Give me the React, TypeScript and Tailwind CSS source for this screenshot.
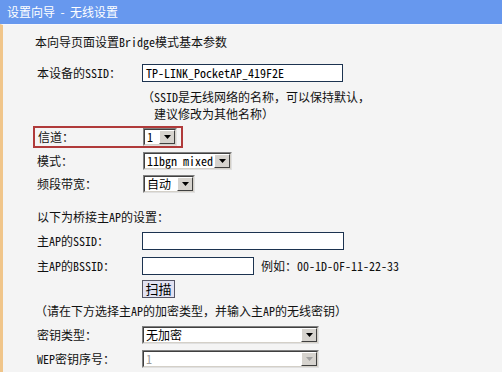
import React from "react";

const Arrow = ({ disabled }: { disabled?: boolean }) => (
  <div className="w-[16px] h-full shrink-0 bg-[#d6d3ce] border border-t-white border-l-white border-r-[#404040] border-b-[#404040] flex items-center justify-center">
    <svg width="7" height="4" viewBox="0 0 7 4">
      <path d="M0 0h7L3.5 4z" fill={disabled ? "#a0a0a0" : "#000"} />
    </svg>
  </div>
);

const Select = ({
  value,
  width,
  disabled,
}: {
  value: string;
  width: string;
  disabled?: boolean;
}) => (
  <div
    className={`${width} h-[18px] flex bg-white border border-t-[#808080] border-l-[#808080] border-r-[#e0e0e0] border-b-[#e0e0e0]`}
  >
    <div className="flex flex-1 border border-t-[#404040] border-l-[#404040] border-r-[#d4d0c8] border-b-[#d4d0c8]">
      <div
        className={`flex-1 pl-[2px] leading-[14px] whitespace-nowrap ${
          disabled ? "text-[#9a9a9a]" : "text-black"
        }`}
      >
        {value}
      </div>
      <Arrow disabled={disabled} />
    </div>
  </div>
);

const Input = ({ value, width }: { value?: string; width: string }) => (
  <div
    className={`${width} h-[18px] bg-white border border-[#1c3350] pl-[3px] leading-[16px] whitespace-nowrap text-black`}
  >
    {value}
  </div>
);

const Row = ({
  label,
  children,
  className,
}: {
  label: string;
  children: React.ReactNode;
  className?: string;
}) => (
  <div className={`flex items-center pl-[34px] h-[18px] ${className ?? ""}`}>
    <div className="w-[105px] shrink-0">{label}</div>
    {children}
  </div>
);

export default function App() {
  return (
    <div className="w-[502px] h-[372px] overflow-hidden flex flex-col text-[12px] text-[#111] font-['Noto_Sans_Mono_CJK_SC','Noto_Sans_CJK_SC',monospace]">
      {/* 标题栏 */}
      <div className="h-[24px] shrink-0 bg-[#6798ee] flex items-center pl-[7px] text-white font-['Noto_Sans_CJK_SC',sans-serif] text-[12px] whitespace-pre">
        设置向导  -  无线设置
      </div>
      <div className="flex-1 bg-[#f4f4f4] border-l-[3px] border-[#f0c58a] border-t border-t-[#f8f8fc] pt-[8px]">
        <div className="pl-[32px] h-[18px] leading-[18px]">
          本向导页面设置Bridge模式基本参数
        </div>

        <Row label="本设备的SSID：" className="mt-[13px]">
          <Input value="TP-LINK_PocketAP_419F2E" width="w-[201px]" />
        </Row>

        <div className="mt-[6px] pl-[139px] leading-[17px]">
          <div>（SSID是无线网络的名称，可以保持默认，</div>
          <div className="pl-[12px]">建议修改为其他名称）</div>
        </div>

        <div className="mt-[4px] ml-[30px] w-[150px] h-[22px] border-2 border-[#b03a3a] flex items-center pl-[3px]">
          <div className="w-[105px] shrink-0">信道：</div>
          <Select value="1" width="w-[34px]" />
        </div>

        <div className="flex items-center pl-[34px] h-[18px] mt-[4px]">
          <div className="w-[106px] shrink-0">模式：</div>
          <Select value="11bgn mixed" width="w-[89px]" />
        </div>

        <div className="flex items-center pl-[34px] h-[18px] mt-[5px]">
          <div className="w-[106px] shrink-0">频段带宽：</div>
          <Select value="自动" width="w-[52px]" />
        </div>

        <div className="mt-[15px] pl-[34px] h-[18px] leading-[18px]">
          以下为桥接主AP的设置：
        </div>

        <Row label="主AP的SSID：" className="mt-[6px]">
          <Input width="w-[202px]" />
        </Row>

        <Row label="主AP的BSSID：" className="mt-[7px]">
          <Input width="w-[112px]" />
          <div className="ml-[7px] whitespace-nowrap">例如：00-1D-0F-11-22-33</div>
        </Row>

        <div className="mt-[5px] pl-[139px] h-[18px]">
          <button className="h-[18px] w-[33px] bg-[#e2e2f2] border border-[#555566] text-[13px] leading-[16px] text-black">
            扫描
          </button>
        </div>

        <div className="mt-[4px] pl-[32px] h-[18px] leading-[18px] whitespace-nowrap">
          （请在下方选择主AP的加密类型，并输入主AP的无线密钥）
        </div>

        <Row label="密钥类型：" className="mt-[6px]">
          <Select value="无加密" width="w-[177px]" />
        </Row>

        <Row label="WEP密钥序号：" className="mt-[6px]">
          <Select value="1" width="w-[177px]" disabled />
        </Row>
      </div>
    </div>
  );
}
